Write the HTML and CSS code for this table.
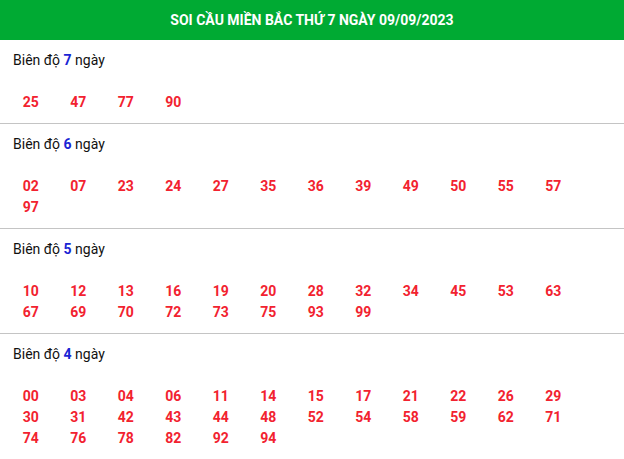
FILE: index.html
```html
<!DOCTYPE html>
<html lang="vi">
<head>
<meta charset="utf-8">
<link rel="stylesheet" href="styles.css">
</head>
<body>
<div class="title">SOI CẦU MIỀN BẮC THỨ 7 NGÀY 09/09/2023</div>
<div class="sec">
  <div class="label">Biên độ <b>7</b> ngày</div>
  <div class="nums"><span>25</span><span>47</span><span>77</span><span>90</span></div>
</div>
<div class="sec">
  <div class="label">Biên độ <b>6</b> ngày</div>
  <div class="nums"><span>02</span><span>07</span><span>23</span><span>24</span><span>27</span><span>35</span><span>36</span><span>39</span><span>49</span><span>50</span><span>55</span><span>57</span><span>97</span></div>
</div>
<div class="sec">
  <div class="label">Biên độ <b>5</b> ngày</div>
  <div class="nums"><span>10</span><span>12</span><span>13</span><span>16</span><span>19</span><span>20</span><span>28</span><span>32</span><span>34</span><span>45</span><span>53</span><span>63</span><span>67</span><span>69</span><span>70</span><span>72</span><span>73</span><span>75</span><span>93</span><span>99</span></div>
</div>
<div class="sec last">
  <div class="label">Biên độ <b>4</b> ngày</div>
  <div class="nums"><span>00</span><span>03</span><span>04</span><span>06</span><span>11</span><span>14</span><span>15</span><span>17</span><span>21</span><span>22</span><span>26</span><span>29</span><span>30</span><span>31</span><span>42</span><span>43</span><span>44</span><span>48</span><span>52</span><span>54</span><span>58</span><span>59</span><span>62</span><span>71</span><span>74</span><span>76</span><span>78</span><span>82</span><span>92</span><span>94</span></div>
</div>
</body>
</html>
```
FILE: styles.css
```css
html, body { margin: 0; padding: 0; background: #fff; }
body { font-family: Roboto, "Liberation Sans", Arial, sans-serif; font-size: 14px; color: #111; }
.title {
  background: #00aa33;
  color: #fff;
  font-weight: bold;
  font-size: 14px;
  height: 40px;
  line-height: 40px;
  text-align: center;
}
.sec { padding: 10px 0 10px; border-bottom: 1px solid #c4c4c4; }
.sec.last { border-bottom: none; }
.label { line-height: 20px; padding-left: 13px; }
.label b { color: #1a25d4; font-weight: bold; }
.nums {
  display: grid;
  grid-template-columns: repeat(12, 47.5px);
  grid-auto-rows: 21px;
  margin-top: 22px;
  padding-left: 7px;
}
.nums span {
  text-align: center;
  line-height: 21px;
  color: #f2222f;
  font-weight: bold;
}
```
